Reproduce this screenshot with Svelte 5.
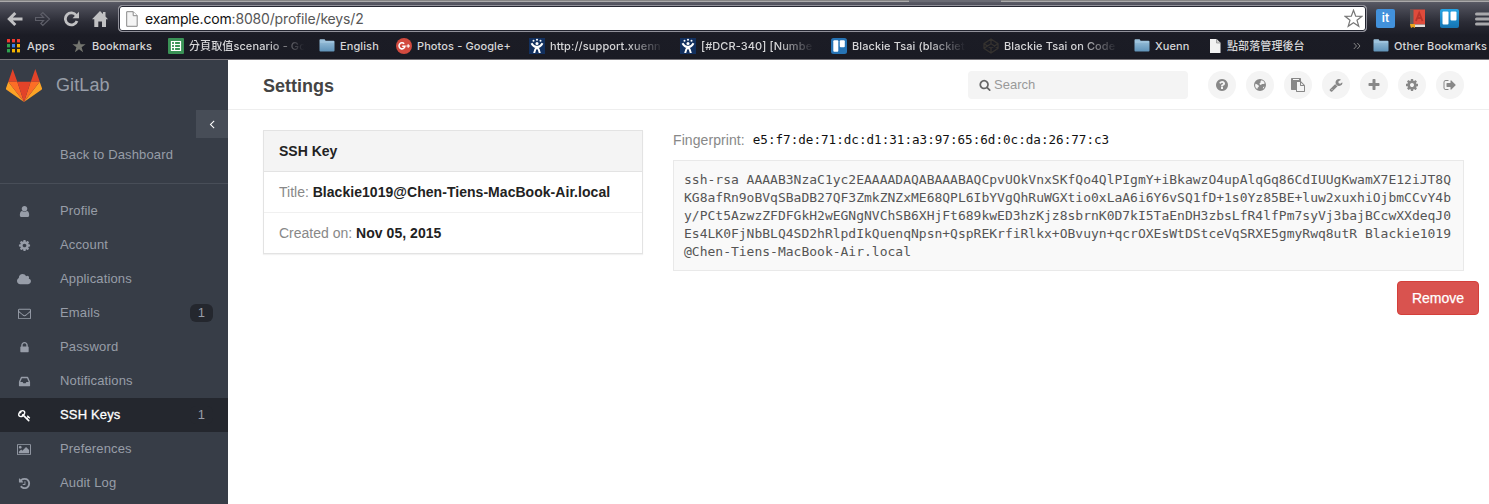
<script>
  const icons = {
    user: ['0 0 1792 1792', 'M1536 1399q0 109-62.5 187t-150.5 78h-854q-88 0-150.5-78t-62.5-187q0-85 8.5-160.5t31.5-152 58.5-131 94-89 134.5-34.5q131 128 313 128t313-128q76 0 134.5 34.5t94 89 58.5 131 31.5 152 8.5 160.5zm-256-887q0 159-112.5 271.5t-271.5 112.5-271.5-112.5-112.5-271.5 112.5-271.5 271.5-112.5 271.5 112.5 112.5 271.5z'],
    gear: ['0 0 1792 1792', 'M1152 896q0-106-75-181t-181-75-181 75-75 181 75 181 181 75 181-75 75-181zm512-109v222q0 12-8 23t-20 13l-185 28q-19 54-39 91 35 50 107 138 10 12 10 25t-9 23q-27 37-99 108t-94 71q-12 0-26-9l-138-108q-44 23-91 38-16 136-29 186-7 28-36 28h-222q-14 0-24.5-8.5t-11.5-21.5l-28-184q-49-16-90-37l-141 107q-10 9-25 9-14 0-25-11-126-114-165-168-7-10-7-23 0-12 8-23 15-21 51-66.5t54-70.5q-27-50-41-99l-183-27q-13-2-21-12.5t-8-23.5v-222q0-12 8-23t19-13l186-28q14-46 39-92-40-57-107-138-10-12-10-24 0-10 9-23 26-36 98.5-107.5t94.5-71.5q13 0 26 10l138 107q44-23 91-38 16-136 29-186 7-28 36-28h222q14 0 24.5 8.5t11.5 21.5l28 184q49 16 90 37l142-107q9-9 24-9 13 0 25 10 129 119 165 170 7 8 7 22 0 12-8 23-15 21-51 66.5t-54 70.5q26 50 41 98l183 28q13 2 21 12.5t8 23.5z'],
    cloud: ['0 0 1920 1792', 'M1920 1152q0 159-112.5 271.5t-271.5 112.5h-1088q-185 0-316.5-131.5t-131.5-316.5q0-132 71-241.5t187-163.5q-2-28-2-43 0-212 150-362t362-150q158 0 286.5 88t187.5 230q70-62 166-62 106 0 181 75t75 181q0 75-41 138 129 30 213 134.5t84 239.5z'],
    mail: ['0 0 1792 1792', 'M1664 1504v-768q-32 36-69 66-268 206-426 338-51 43-83 67t-86.5 48.5-102.5 24.5h-2q-48 0-102.5-24.5t-86.5-48.5-83-67q-158-132-426-338-37-30-69-66v768q0 13 9.5 22.5t22.5 9.5h1472q13 0 22.5-9.5t9.5-22.5zm0-1051v-24.5l-.5-13-3-12.5-5.5-9-9-7.5-14-2.5h-1472q-13 0-22.5 9.5t-9.5 22.5q0 168 147 284 193 152 401 317 6 5 35 29.5t46 37.5 44.5 31.5 50.5 27.5 43 9h2q20 0 43-9t50.5-27.5 44.5-31.5 46-37.5 35-29.5q208-165 401-317 54-43 100.5-115.5t46.5-131.5zm128-37v1088q0 66-47 113t-113 47h-1472q-66 0-113-47t-47-113v-1088q0-66 47-113t113-47h1472q66 0 113 47t47 113z'],
    lock: ['0 0 1792 1792', 'M640 768h512v-192q0-106-75-181t-181-75-181 75-75 181v192zm832 96v576q0 40-28 68t-68 28h-960q-40 0-68-28t-28-68v-576q0-40 28-68t68-28h32v-192q0-184 132-316t316-132 316 132 132 316v192h32q40 0 68 28t28 68z'],
    inbox: ['0 0 1792 1792', 'M1151 960h316q-1-3-2.5-8.5t-2.5-7.5l-212-496h-708l-212 496q-1 3-2.5 8.5t-2.5 7.5h316l95 192h320zm513 30v482q0 26-19 45t-45 19h-1408q-26 0-45-19t-19-45v-482q0-62 25-123l238-552q10-25 36.5-42t52.5-17h832q26 0 52.5 17t36.5 42l238 552q25 61 25 123z'],
    key: ['0 0 1792 1792', 'M832 512q0-80-56-136t-136-56-136 56-56 136q0 42 19 83-41-19-83-19-80 0-136 56t-56 136 56 136 136 56 136-56 56-136q0-42-19-83 41 19 83 19 80 0 136-56t56-136zm851 704q0 17-49 66t-66 49q-9 0-28.5-16t-36.5-33-38.5-40-24.5-26l-96 96 220 220q28 28 28 68 0 42-39 81t-81 39q-40 0-68-28l-671-671q-176 131-365 131-163 0-265.5-102.5t-102.5-265.5q0-160 95-313t248-248 313-95q163 0 265.5 102.5t102.5 265.5q0 189-131 365l355 355 96-96q-3-3-26-24.5t-40-38.5-33-36.5-16-28.5q0-17 49-66t66-49q13 0 23 10 6 6 46 44.5t82 79.5 86.5 86 73 78 28.5 41z'],
    image: ['-64 0 1920 1792', 'M576 576q0 80-56 136t-136 56-136-56-56-136 56-136 136-56 136 56 56 136zm1024 384v448h-1408v-192l320-320 160 160 512-512zm96-704h-1600q-13 0-22.5 9.5t-9.5 22.5v1216q0 13 9.5 22.5t22.5 9.5h1600q13 0 22.5-9.5t9.5-22.5v-1216q0-13-9.5-22.5t-22.5-9.5zm160 32v1216q0 66-47 113t-113 47h-1600q-66 0-113-47t-47-113v-1216q0-66 47-113t113-47h1600q66 0 113 47t47 113z'],
    history: ['0 0 1792 1792', 'M1664 896q0 156-61 298t-164 245-245 164-298 61q-172 0-327-72.5t-264-204.5q-7-10-6.5-22.5t8.5-20.5l137-138q10-9 25-9 16 2 23 12 73 95 179 147t225 52q104 0 198.5-40.5t163.5-109.5 109.5-163.5 40.5-198.5-40.5-198.5-109.5-163.5-163.5-109.5-198.5-40.5q-98 0-188 35.5t-160 101.5l137 138q31 30 14 69-17 40-59 40h-448q-26 0-45-19t-19-45v-448q0-42 40-59 39-17 69 14l130 129q107-101 244.5-156.5t284.5-55.5q156 0 298 61t245 164 164 245 61 298zm-640-288v448q0 14-9 23t-23 9h-320q-14 0-23-9t-9-23v-64q0-14 9-23t23-9h224v-352q0-14 9-23t23-9h64q14 0 23 9t9 23z'],
    left: ['0 0 1792 1792', 'M1203 544q0 13-10 23l-393 393 393 393q10 10 10 23t-10 23l-50 50q-10 10-23 10t-23-10l-466-466q-10-10-10-23t10-23l466-466q10-10 23-10t23 10l50 50q10 10 10 23z'],
    search: ['0 0 1792 1792', 'M1216 832q0-185-131.5-316.5t-316.5-131.5-316.5 131.5-131.5 316.5 131.5 316.5 316.5 131.5 316.5-131.5 131.5-316.5zm512 832q0 52-38 90t-90 38q-54 0-90-38l-343-342q-179 124-399 124-143 0-273.5-55.5t-225-150-150-225-55.5-273.5 55.5-273.5 150-225 225-150 273.5-55.5 273.5 55.5 225 150 150 225 55.5 273.5q0 220-124 399l343 343q37 37 37 90z'],
    help: ['0 0 1792 1792', 'M1024 1376v-192q0-14-9-23t-23-9h-192q-14 0-23 9t-9 23v192q0 14 9 23t23 9h192q14 0 23-9t9-23zm256-672q0-88-55.5-163t-138.5-116-170-41q-243 0-371 213-15 24 8 42l132 100q7 6 19 6 16 0 25-12 53-68 86-92 34-24 86-24 48 0 85.5 26t37.5 59q0 38-20 61t-68 45q-63 28-115.5 86.5t-52.5 125.5v36q0 14 9 23t23 9h192q14 0 23-9t9-23q0-19 21.5-49.5t54.5-49.5q32-18 49-28.5t46-35 44.5-48 28-60.5 12.5-81zm384 192q0 209-103 385.5t-279.5 279.5-385.5 103-385.5-103-279.5-279.5-103-385.5 103-385.5 279.5-279.5 385.5-103 385.5 103 279.5 279.5 103 385.5z'],
    globe: ['0 0 14 14', 'M7 1a6 6 0 1 0 0 12A6 6 0 0 0 7 1zM8.600 2.300L10.400 3l1.500 2.200-1.300.9-1.500-.2-1.300 1.200-1.300-.8.2-1.200 1.400-1.100-.9-.8zM2.400 5.800l1.500.5 1.800 1.300.1 1.200-1.200 1-.2 1.300L2.900 10l-.8-2zM10.200 9l1.200-.4-.6 1.300-1 .8z'],
    paste: ['0 0 1792 1792', 'M768 1664h896v-640h-416q-40 0-68-28t-28-68v-416h-384v1152zm256-1440v-64q0-13-9.5-22.5t-22.5-9.5h-704q-13 0-22.5 9.5t-9.5 22.5v64q0 13 9.5 22.5t22.5 9.5h704q13 0 22.5-9.5t9.5-22.5zm256 672h299l-299-299v299zm512 128v672q0 40-28 68t-68 28h-960q-40 0-68-28t-28-68v-160h-544q-40 0-68-28t-28-68v-1344q0-40 28-68t68-28h1088q40 0 68 28t28 68v328q21 13 36 28l408 408q28 28 48 76t20 88z'],
    wrench: ['0 0 1792 1792', 'M448 1472q0-26-19-45t-45-19-45 19-19 45 19 45 45 19 45-19 19-45zm644-420l-682 682q-37 37-90 37-52 0-91-37l-106-108q-38-36-38-90 0-53 38-91l681-681q39 98 114.5 173.5t173.5 114.5zm634-435q0 39-23 106-47 134-164.5 217.5t-258.5 83.5q-185 0-316.5-131.5t-131.5-316.5 131.5-316.5 316.5-131.5q58 0 121.5 16.5t107.5 46.5q16 11 16 28t-16 28l-293 169v224l193 107q5-3 79-48.5t135.5-81 70.5-35.5q15 0 23.5 10t8.5 25z'],
    plus: ['0 0 1792 1792', 'M1600 736v192q0 40-28 68t-68 28h-416v416q0 40-28 68t-68 28h-192q-40 0-68-28t-28-68v-416h-416q-40 0-68-28t-28-68v-192q0-40 28-68t68-28h416v-416q0-40 28-68t68-28h192q40 0 68 28t28 68v416h416q40 0 68 28t28 68z'],
    signout: ['0 0 1792 1792', 'M704 1440q0 4 1 20t.5 26.5-3 23.5-10 19.5-20.5 6.5h-320q-119 0-203.5-84.5t-84.5-203.5v-704q0-119 84.5-203.5t203.5-84.5h320q13 0 22.5 9.5t9.5 22.5q0 4 1 20t.5 26.5-3 23.5-10 19.5-20.5 6.5h-320q-66 0-113 47t-47 113v704q0 66 47 113t113 47h312l11.5 1 11.5 3 8 5.5 7 9 2 13.5zm928-544q0 26-19 45l-544 544q-19 19-45 19t-45-19-19-45v-288h-448q-26 0-45-19t-19-45v-384q0-26 19-45t45-19h448v-288q0-26 19-45t45-19 45 19l544 544q19 19 19 45z'],
  };

  const nav = [
    { icon: 'user', label: 'Profile' },
    { icon: 'gear', label: 'Account' },
    { icon: 'cloud', label: 'Applications' },
    { icon: 'mail', label: 'Emails', count: 1 },
    { icon: 'lock', label: 'Password' },
    { icon: 'inbox', label: 'Notifications' },
    { icon: 'key', label: 'SSH Keys', count: 1, active: true },
    { icon: 'image', label: 'Preferences' },
    { icon: 'history', label: 'Audit Log' },
  ];

  const tools = ['help', 'globe', 'paste', 'wrench', 'plus', 'gear', 'signout'];

  // slot: distance to the next bookmark; text: room for the title
  const bookmarks = [
    { kind: 'apps', label: 'Apps', slot: 65, text: 34 },
    { kind: 'star', label: 'Bookmarks', slot: 97, text: 66 },
    { kind: 'sheet', label: '分頁取值scenario - Go', slot: 151, text: 118, fade: true },
    { kind: 'folder', label: 'English', slot: 77, text: 50 },
    { kind: 'gplus', label: 'Photos - Google+', slot: 133, text: 110 },
    { kind: 'jira', label: 'http://support.xuenn', slot: 151, text: 116, fade: true },
    { kind: 'jira', label: '[#DCR-340] [Numbe', slot: 151, text: 116, fade: true },
    { kind: 'trello', label: 'Blackie Tsai (blackiet', slot: 152, text: 116, fade: true },
    { kind: 'codepen', label: 'Blackie Tsai on Code', slot: 151, text: 116, fade: true },
    { kind: 'folder', label: 'Xuenn', slot: 73, text: 50 },
    { kind: 'page', label: '點部落管理後台', slot: 146, text: 90 },
  ];

  const keyLines = [
    'ssh-rsa AAAAB3NzaC1yc2EAAAADAQABAAABAQCpvUOkVnxSKfQo4QlPIgmY+iBkawzO4upAlqGq86CdIUUgKwamX7E12iJT8Q',
    'KG8afRn9oBVqSBaDB27QF3ZmkZNZxME68QPL6IbYVgQhRuWGXtio0xLaA6i6Y6vSQ1fD+1s0Yz85BE+luw2xuxhiOjbmCCvY4b',
    'y/PCt5AzwzZFDFGkH2wEGNgNVChSB6XHjFt689kwED3hzKjz8sbrnK0D7kI5TaEnDH3zbsLfR4lfPm7syVj3bajBCcwXXdeqJ0',
    'Es4LK0FjNbBLQ4SD2hRlpdIkQuenqNpsn+QspREKrfiRlkx+OBvuyn+qcrOXEsWtDStceVqSRXE5gmyRwq8utR Blackie1019',
    '@Chen-Tiens-MacBook-Air.local',
  ];
  const appColors = ['#ef3b30', '#ef3b30', '#ef3b30', '#2fa24f', '#3a7fee', '#f5b400', '#2fa24f', '#f5b400', '#f5b400'];
</script>

{#snippet glyph(name, size)}
  <svg class="glyph" viewBox={icons[name][0]} height={size} fill="currentColor" fill-rule={name === 'globe' ? 'evenodd' : 'nonzero'} aria-hidden="true"><path d={icons[name][1]} /></svg>
{/snippet}

{#snippet favicon(kind)}
  <svg class="fav" width="16" height="16" viewBox="0 0 16 16" aria-hidden="true">
    {#if kind === 'apps'}
      {#each appColors as color, i}
        <rect x={1 + (i % 3) * 5} y={1 + Math.floor(i / 3) * 5} width="3" height="3.4" fill={color} />
      {/each}
    {:else if kind === 'star'}
      <path d="M8 1.5l1.6 4.8h5l-4 3 1.5 5L8 11.3l-4.1 3 1.5-5-4-3h5z" fill="#74756f" />
    {:else if kind === 'sheet'}
      <rect width="16" height="16" rx="1" fill="#3a9256" />
      <path d="M3.5 3.5h9v9h-9zM6.5 3.5v9M3.5 6.5h9M3.5 9.5h9" fill="none" stroke="#fff" stroke-width="1.2" />
    {:else if kind === 'folder'}
      <path d="M.5 2.200q0-.9.9-.9h4.200l1 1.500h7.900q1 0 1 1v8.800q0 .9-.9.9H1.400q-.9 0-.9-.9z" fill="url(#folderFill)" />
      <path d="M1 4h14" stroke="#b4d3e8" stroke-width=".7" />
    {:else if kind === 'gplus'}
      <circle cx="8" cy="8" r="8" fill="#d24a3f" />
      <path d="M8.200 5.800A3 3 0 1 0 9 8.200H6.200" fill="none" stroke="#fff" stroke-width="1.500" />
      <path d="M12.200 6.200v3.600M10.400 8H14" stroke="#fff" stroke-width="1.100" />
    {:else if kind === 'jira'}
      <rect width="16" height="16" fill="#12305f" />
      <path d="M2.5 5.200q2.200 4.200 5.500 3.500 3.300.7 5.500-3.500M5.200 15q.3-3.700 2.800-5.800 2.500 2.100 2.800 5.800" fill="none" stroke="#fff" stroke-width="2" />
      <circle cx="8" cy="5.400" r="1.500" fill="#fff" />
      <circle cx="4.500" cy="2.800" r="1" fill="#fff" /><circle cx="8" cy="1.700" r="1" fill="#fff" /><circle cx="11.500" cy="2.800" r="1" fill="#fff" />
    {:else if kind === 'trello'}
      <rect width="16" height="16" rx="2.500" fill="#2673b4" />
      <rect x="2.300" y="2.200" width="5" height="11.500" rx="1" fill="#fff" /><rect x="8.800" y="2.200" width="5" height="7" rx="1" fill="#fff" />
    {:else if kind === 'codepen'}
      <path d="M8 1l7 4.700v4.600L8 15l-7-4.700V5.700zM8 1v4.700M8 10.300V15M1 5.700l7 4.600 7-4.600M1 10.300l7-4.600 7 4.600" fill="none" stroke="#35322f" stroke-width="1.300" />
    {:else}
      <path d="M3 1h6.500L13.500 5v10H3z" fill="#f2f2f2" /><path d="M9.500 1v4h4" fill="#d2d2d2" stroke="#8b8b8b" stroke-width=".7" />
    {/if}
  </svg>
{/snippet}

<div class="window">
  <svg width="0" height="0" class="defs" aria-hidden="true">
    <linearGradient id="folderFill" x1="0" y1="0" x2="0" y2="1"><stop stop-color="#a0c5de" /><stop offset="1" stop-color="#5f92b8" /></linearGradient>
    <linearGradient id="trelloFill" x1="0" y1="0" x2="0" y2="1"><stop stop-color="#27a4e4" /><stop offset="1" stop-color="#1574b2" /></linearGradient>
  </svg>

  <div class="browser">
    <div class="tabs"><i></i></div>
    <div class="toolbar">
      <div class="controls">
        <svg width="16" height="16" viewBox="0 0 16 16" fill="none" stroke="#c1c1c3" stroke-width="3"><path d="M15.500 8H3M8.300 2L2.300 8l6 6" /></svg>
        <svg width="16" height="16" viewBox="0 0 16 16" fill="none" stroke="#5d5e68" stroke-width="1.200"><path d="M.5 6.500h8L5.800 3.500l2-2L14.500 8l-6.700 6.500-2-2 2.700-3h-8z" /></svg>
        <svg width="17" height="16" viewBox="0 0 17 16" fill="none" stroke="#c1c1c3" stroke-width="2.800"><path d="M13.300 4.500A6 6 0 1 0 14 10" /><path d="M16 .8v6.500H9.500z" fill="#c1c1c3" stroke="none" /></svg>
        <svg width="16" height="16" viewBox="0 0 16 16" fill="#c1c1c3"><path d="M8 0l3 3V1h2.500v4.500L16 8.200h-2V16h-4v-5.500H6.300V16h-4V8.200H0z" /></svg>
      </div>
      <div class="address">
        <svg width="12" height="16" viewBox="0 0 12 16"><path d="M.7.7h6.500l4 4v10.600H.7z" fill="#f4f4f4" stroke="#888" /><path d="M7.200.7v4h4" fill="#fff" stroke="#888" /></svg>
        <span class="url"><b>example.com</b>:8080/profile/keys/2</span>
        <svg class="mark" width="19" height="19" viewBox="0 0 19 19" fill="#fff" stroke="#777" stroke-width="1.200"><path d="M9.500 1.200l2.200 5.900 6.200.2-4.900 3.900 1.800 6.100-5.300-3.500-5.300 3.500L6 11.200 1.100 7.300l6.200-.2z" /></svg>
      </div>
      <div class="extensions">
        <span class="it">it</span>
        <svg width="17" height="20" viewBox="0 0 17 20"><path d="M1 .5h15v15H1z" fill="#df4b3b" /><path d="M1 .5h3.500v15L1 18z" fill="#5c5b5a" /><path d="M3 15.500h13V18H3z" fill="#e4e0db" /><path d="M1 15h5v4l-2-1-2 1z" fill="#eaa61e" /><path d="M7 12l3.200-8L13.500 12M8.200 9h4" fill="none" stroke="#b9342a" stroke-width="1.800" /></svg>
        <svg width="19" height="19" viewBox="0 0 19 19"><rect width="19" height="19" rx="2" fill="url(#trelloFill)" /><rect x="2.500" y="2.500" width="6" height="13" rx="1" fill="#fff" /><rect x="10.500" y="2.500" width="6" height="9" rx="1" fill="#fff" /></svg>
        <svg width="14" height="14" viewBox="0 0 14 14" stroke="#a9a9ac" stroke-width="3" stroke-linecap="round"><path d="M1.500 2H14M1.500 7H14M1.500 12H14" /></svg>
      </div>
    </div>
    <div class="bookmarks">
      {#each bookmarks as b}
        <div class="bookmark {b.kind}" style="width: {b.slot}px">
          {@render favicon(b.kind)}
          <span class="title" class:fade={b.fade} style="width: {b.text}px">{b.label}</span>
        </div>
      {/each}
      <svg class="more" width="8" height="8" viewBox="0 0 8 8" fill="none" stroke="#858585"><path d="M.8 1l2.700 3L.8 7M4.300 1L7 4 4.300 7" /></svg>
      <div class="bookmark folder">{@render favicon('folder')}<span class="title other">Other Bookmarks</span></div>
    </div>
  </div>

  <div class="app">
    <aside>
      <div class="brand">
        <svg width="36" height="33" viewBox="0 0 36 33">
          <path d="M6.700 0L2.300 12.800h9zM29.300 0l-4.500 12.800h9z" fill="#e24329" />
          <path d="M2.300 12.800L0 19.300q-.2.900.5 1.500L18 33zM33.700 12.800L36 19.300q.2.900-.5 1.500L18 33z" fill="#fca326" />
          <path d="M2.300 12.800h9L18 33zM33.700 12.800h-9L18 33z" fill="#fc6d26" />
          <path d="M11.300 12.800h13.400L18 33z" fill="#e24329" />
        </svg>
        <span>GitLab</span>
      </div>
      <div class="collapse">{@render glyph('left', 14)}</div>
      <div class="back">Back to Dashboard</div>
      <nav>
        {#each nav as n}
          <div class="item" class:active={n.active}>
            <span class="ico">{@render glyph(n.icon, 13)}</span>
            <span class="label">{n.label}</span>
            {#if n.count}<span class="count">{n.count}</span>{/if}
          </div>
        {/each}
      </nav>
    </aside>

    <main>
      <header>
        <h1>Settings</h1>
        <div class="search">{@render glyph('search', 12)}<span>Search</span></div>
        <div class="tools">
          {#each tools as t}<span class="tool">{@render glyph(t, 14)}</span>{/each}
        </div>
      </header>
      <div class="content">
        <section class="panel">
          <div class="heading">SSH Key</div>
          <div class="row title-row"><span>Title:</span> <strong>Blackie1019@Chen-Tiens-MacBook-Air.local</strong></div>
          <div class="row"><span>Created on:</span> <strong>Nov 05, 2015</strong></div>
        </section>
        <section class="details">
          <p><span>Fingerprint:</span><code>e5:f7:de:71:dc:d1:31:a3:97:65:6d:0c:da:26:77:c3</code></p>
          <pre>{keyLines.join('\n')}</pre>
          <button>Remove</button>
        </section>
      </div>
    </main>
  </div>
</div>

<style>
  :global(body) { margin: 0; background: #fff; }
  .window { width: 1489px; height: 504px; overflow: hidden; display: flex; flex-direction: column; font: 14px/20px "Liberation Sans", Arial, sans-serif; }
  .window * { box-sizing: border-box; }
  .defs { position: absolute; }
  svg { display: block; flex: none; }

  .browser { height: 60px; flex: none; border-bottom: 1px solid #77757a; background: linear-gradient(#61626c 0, #50515c 5px, #2b2c36 22px, #1b1c25 35px, #1a1b24); font-family: Inter, "Noto Sans CJK TC", sans-serif; }
  .tabs { height: 2px; background: linear-gradient(#858585 1px, #aaa9aa 1px); display: flex; }
  .tabs i { width: 92px; height: 2px; margin-left: 909px; background: #6a6b74; }
  .toolbar { height: 33px; display: flex; align-items: center; }
  .controls { width: 118px; padding-left: 7px; display: flex; align-items: center; gap: 12px; }
  .address { width: 1249px; height: 27px; border: 1px solid #91919a; box-shadow: inset 0 0 0 1px #242631; border-radius: 4px; background: #fff; display: flex; align-items: center; padding: 0 3px 0 7px; }
  .url { font-size: 14px; letter-spacing: -.17px; color: #575757; margin-left: 7px; white-space: nowrap; }
  .url b { font-weight: 400; color: #111; }
  .mark { margin-left: auto; }
  .extensions { display: flex; align-items: center; gap: 14px; padding-left: 9px; }
  .extensions svg:last-child { margin-left: 2px; }
  .it { width: 19px; height: 19px; border-radius: 2px; background: #4291db; color: #fff; font-weight: 600; font-size: 12px; line-height: 18px; text-align: center; }
  .bookmarks { height: 24px; display: flex; align-items: center; padding-left: 6px; margin-top: -1px; }
  .bookmark { display: flex; align-items: center; gap: 5px; flex: none; }
  .bookmark.page { gap: 4px; }
  .title { font-size: 11px; font-weight: 500; letter-spacing: .1px; line-height: 24px; color: #d6d6d8; white-space: nowrap; }
  .fade { -webkit-mask-image: linear-gradient(90deg, #000 66%, transparent 98%); mask-image: linear-gradient(90deg, #000 66%, transparent 98%); }
  .more { margin-right: 12px; }

  .app { flex: 1; display: flex; min-height: 0; }
  aside { width: 228px; background: #373d47; color: #979da8; display: flex; flex-direction: column; font-size: 13px; letter-spacing: .15px; }
  .brand { height: 50px; flex: none; display: flex; align-items: center; gap: 14px; padding-left: 6px; font-size: 18px; letter-spacing: .1px; }
  .collapse { align-self: flex-end; width: 32px; height: 28px; background: #474d57; color: #fff; display: flex; align-items: center; justify-content: center; }
  .back { height: 46px; padding: 7px 0 0 60px; border-bottom: 1px solid #484e58; }
  nav { padding-top: 10px; }
  .item { height: 34px; display: flex; align-items: center; padding-right: 15px; }
  .ico { width: 48px; display: flex; justify-content: center; }
  .label { margin: -1px 0 0 12px; flex: 1; }
  .count { width: 23px; height: 18px; border-radius: 6px; background: #24272e; line-height: 18px; text-align: center; }
  .item.active { background: #24272e; color: #fff; }
  .active .label { -webkit-text-stroke: .3px #fff; }
  .active .count { color: #979da8; }

  main { flex: 1; background: #fff; }
  header { height: 50px; border-bottom: 1px solid #eee; display: flex; align-items: center; padding: 0 25px 0 35px; }
  h1 { margin: 2px 0 0; font-size: 18px; line-height: 24px; color: #444; }
  .search { width: 220px; height: 28px; margin: 1px 20px 0 auto; border-radius: 4px; background: #f4f4f4; display: flex; align-items: center; gap: 3px; padding-left: 11px; color: #666; }
  .search span { color: #999; font-size: 13px; margin-top: -1px; }
  .tools { display: flex; gap: 10px; margin-top: 1px; }
  .tool { width: 28px; height: 28px; border-radius: 50%; background: #f4f4f4; color: #888; display: flex; align-items: center; justify-content: center; }
  .content { display: flex; align-items: flex-start; padding: 20px 10px 0 35px; gap: 30px; }
  .panel { width: 380px; height: 124px; border: 1px solid #e3e3e3; box-shadow: 0 1px 1px rgba(0,0,0,.05); }
  .heading { height: 41px; background: #f4f4f4; border-bottom: 1px solid #e3e3e3; padding: 10px 15px; font-weight: 700; color: #222; }
  .row { height: 41px; padding: 10px 15px; color: #888; white-space: nowrap; }
  .title-row { border-bottom: 1px solid #f0f0f0; }
  strong { color: #222; letter-spacing: .04px; }
  .details { width: 806px; display: flex; flex-direction: column; }
  p { margin: 0 0 10px; display: flex; gap: 8px; color: #888; }
  p span { letter-spacing: .08px; }
  code { font: 12.600px/20px "DejaVu Sans Mono", monospace; color: #111; }
  pre { margin: 0; width: 791px; height: 111px; padding: 10px; background: #f9f9f9; border: 1px solid #e9e9e9; color: #555; font: 13px/18px "DejaVu Sans Mono", monospace; }
  button { align-self: flex-end; width: 82px; height: 34px; margin-top: 10px; border: 1px solid #d43f3a; border-radius: 4px; background: #d9534f; color: #fff; font: 14px "Liberation Sans", Arial, sans-serif; -webkit-text-stroke: .25px #fff; padding: 0; }
</style>
